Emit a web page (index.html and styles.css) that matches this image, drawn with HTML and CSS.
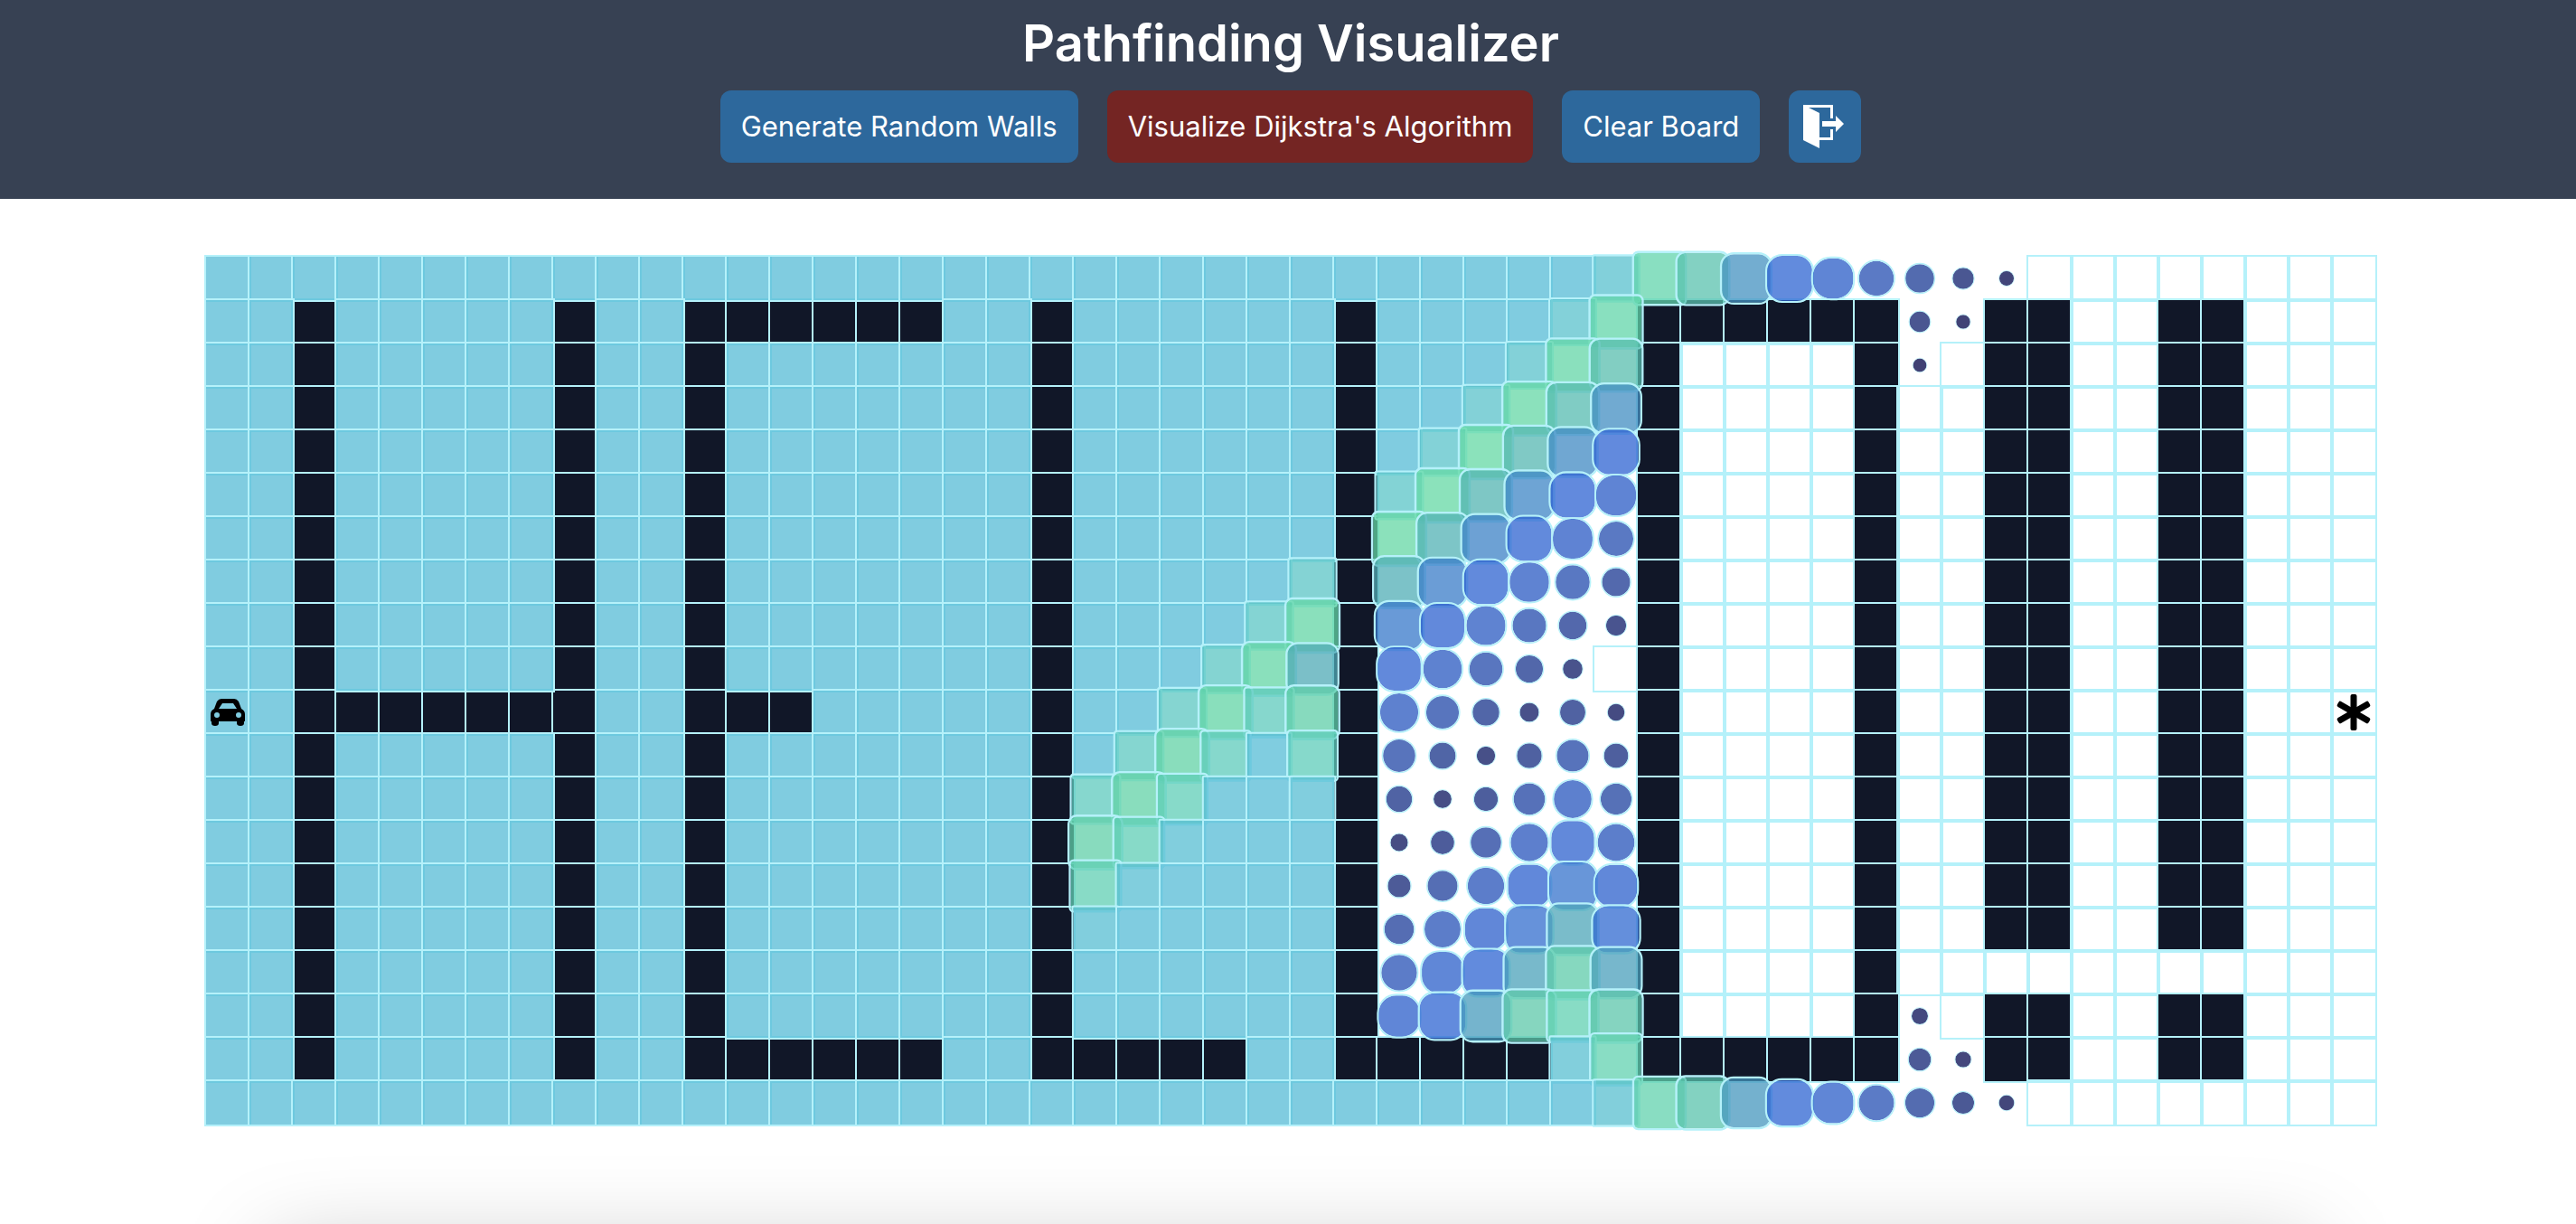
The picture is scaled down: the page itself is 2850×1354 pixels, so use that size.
FILE: index.html
```html
<!DOCTYPE html>
<html lang="en">
<head>
<meta charset="utf-8">
<title>Pathfinding Visualizer</title>
<link rel="stylesheet" href="styles.css">
</head>
<body>
<header class="toolbar">
  <h1 class="title">Pathfinding Visualizer</h1>
  <div class="actions">
    <button class="btn" type="button">Generate Random Walls</button>
    <button class="btn btn-danger" type="button">Visualize Dijkstra's Algorithm</button>
    <button class="btn" type="button">Clear Board</button>
    <button class="btn btn-icon" type="button" aria-label="Exit">
      <svg class="exit-icon" viewBox="0 0 48 48" aria-hidden="true">
        <path fill="#fff" d="M0 0H33V15H30V3H6L18 9V36H30V27H33V39H18V48L0 39ZM21 18H36V12L45 21L36 30V24H21Z"/>
      </svg>
    </button>
  </div>
</header>
<main class="stage">
  <div class="board" id="board"></div>
</main>
<div class="sheet"></div>
<template id="start-icon">
  <svg class="car-icon" viewBox="0 0 38 30">
    <path fill="#000" fill-rule="evenodd" d="M12 0H26Q29 0 31 3L34 11Q38 13 38 17V25H37V27Q37 30 33 30Q29 30 29 27V25H9V27Q9 30 5 30Q1 30 1 27V25H0V17Q0 13 4 11L7 3Q9 0 12 0ZM13 5L9 11H29L25 5ZM7 15A3 3 0 1 0 7 21A3 3 0 1 0 7 15ZM31 15A3 3 0 1 0 31 21A3 3 0 1 0 31 15Z"/>
  </svg>
</template>
<template id="finish-icon">
  <svg class="star-icon" viewBox="0 0 40 40">
    <rect x="16.5" width="7" height="40" rx="2"/>
    <rect x="16.5" width="7" height="40" rx="2" transform="rotate(60 20 20)"/>
    <rect x="16.5" width="7" height="40" rx="2" transform="rotate(-60 20 20)"/>
  </svg>
</template>
<script src="board.js"></script>
</body>
</html>
```
FILE: styles.css
```css
* { box-sizing: border-box; }
body {
  display: flex;
  flex-direction: column;
  margin: 0;
  min-height: 100vh;
  overflow: hidden;
  background: #fff;
  font-family: Inter, "Liberation Sans", sans-serif;
}
.toolbar {
  display: flex;
  flex-direction: column;
  align-items: center;
  gap: 10px;
  padding: 6px 0 40px 6px;
  background: #374153;
}
.title {
  margin: 0;
  color: #fff;
  font-size: 56px;
  font-weight: 600;
  line-height: 84px;
}
.actions { display: flex; gap: 32px; }
.btn {
  height: 80px;
  padding: 0 23px;
  border: 0;
  border-radius: 12px;
  background: #2d689c;
  color: #fff;
  font-family: inherit;
  font-size: 31px;
  line-height: 48px;
}
.btn-danger { background: #742523; }
.btn-icon { padding: 0 16px; }
.exit-icon { display: block; width: 48px; height: 48px; }
.stage {
  display: flex;
  justify-content: center;
  padding: 64px 0 0 6px;
}
.board {
  display: grid;
  grid-template-columns: repeat(50, 48px);
  grid-auto-rows: 48px;
}
.node {
  position: relative;
  z-index: 0;
  display: flex;
  align-items: center;
  justify-content: center;
  outline: 2px solid #b5f1fa;
}
.wall { background: #111728; }
.visited {
  z-index: 1;
  background: rgba(86, 187, 214, .75);
}
.car-icon { width: 38px; height: 30px; }
.star-icon { width: 40px; height: 40px; }
.sheet {
  height: 0;
  margin: auto 394px 0 400px;
  box-shadow: 0 130px 100px 100px rgba(0, 0, 0, .25);
}
```
FILE: board.js
```js
const ROWS = 20;
const COLS = 50;
const START = [10, 0];
const FINISH = [10, 49];
const STEP_MS = 10;
const LEAD_MS = 10;
const DURATION_MS = 1500;

// Each wall run: first row, last row, first column, last column.
const WALL_RUNS = [
  [1, 18, 2, 2], [1, 18, 8, 8], [10, 10, 3, 7],
  [1, 18, 11, 11], [1, 1, 12, 16], [10, 10, 12, 13], [18, 18, 12, 16],
  [1, 18, 19, 19], [18, 18, 20, 23],
  [1, 18, 26, 26], [18, 18, 27, 30],
  [1, 18, 33, 33], [1, 18, 38, 38], [1, 1, 34, 37], [18, 18, 34, 37],
  [1, 15, 41, 42], [17, 18, 41, 42],
  [1, 15, 45, 46], [17, 18, 45, 46]
];
// The last node reached so far by the search.
const LAST_REACHED = [2, 39];

// Keyframes of a visited node: [progress, value].
const SCALE = [[0, [0.3]], [0.75, [1.2]], [1, [1]]];
const RADIUS = [[0, [100]], [1, [0]]];
const COLOR = [
  [0, [0, 0, 66]], [0.5, [46, 100, 210]],
  [0.75, [100, 216, 164]], [1, [86, 187, 214]]
];

// CSS ease-out, cubic-bezier(0, 0, .58, 1).
function easeOut(x) {
  let lo = 0;
  let hi = 1;
  for (let i = 0; i < 30; i++) {
    const t = (lo + hi) / 2;
    if (3 * 0.58 * (1 - t) * t * t + t * t * t < x) lo = t;
    else hi = t;
  }
  return 3 * (1 - lo) * lo * lo + lo * lo * lo;
}

function sample(frames, progress) {
  let i = 1;
  while (i < frames.length - 1 && progress > frames[i][0]) i++;
  const [p0, from] = frames[i - 1];
  const [p1, to] = frames[i];
  const k = easeOut((progress - p0) / (p1 - p0));
  return from.map((v, n) => v + (to[n] - v) * k);
}

const walls = new Set();
for (const [r0, r1, c0, c1] of WALL_RUNS) {
  for (let r = r0; r <= r1; r++) {
    for (let c = c0; c <= c1; c++) walls.add(r * COLS + c);
  }
}

function visitOrder() {
  const queue = [START];
  const order = new Map([[START[0] * COLS + START[1], 0]]);
  for (const [r, c] of queue) {
    for (const [nr, nc] of [[r - 1, c], [r, c - 1], [r, c + 1], [r + 1, c]]) {
      const id = nr * COLS + nc;
      if (nr < 0 || nr >= ROWS || nc < 0 || nc >= COLS) continue;
      if (walls.has(id) || order.has(id)) continue;
      order.set(id, order.size);
      queue.push([nr, nc]);
    }
  }
  return order;
}

const order = visitOrder();
const last = order.get(LAST_REACHED[0] * COLS + LAST_REACHED[1]);
const board = document.getElementById('board');

for (let r = 0; r < ROWS; r++) {
  for (let c = 0; c < COLS; c++) {
    const id = r * COLS + c;
    const node = document.createElement('div');
    node.className = 'node';
    if (walls.has(id)) node.classList.add('wall');
    else if (order.has(id) && order.get(id) <= last) {
      node.classList.add('visited');
      const progress = ((last - order.get(id)) * STEP_MS + LEAD_MS) / DURATION_MS;
      if (progress < 1) {
        const rgb = sample(COLOR, progress).map(Math.round).join(', ');
        node.style.transform = `scale(${sample(SCALE, progress)[0].toFixed(3)})`;
        node.style.borderRadius = `${sample(RADIUS, progress)[0].toFixed(1)}%`;
        node.style.backgroundColor = `rgba(${rgb}, .75)`;
      }
    }
    if (r === START[0] && c === START[1]) {
      node.append(document.getElementById('start-icon').content.cloneNode(true));
    }
    if (r === FINISH[0] && c === FINISH[1]) {
      node.append(document.getElementById('finish-icon').content.cloneNode(true));
    }
    board.append(node);
  }
}
```
